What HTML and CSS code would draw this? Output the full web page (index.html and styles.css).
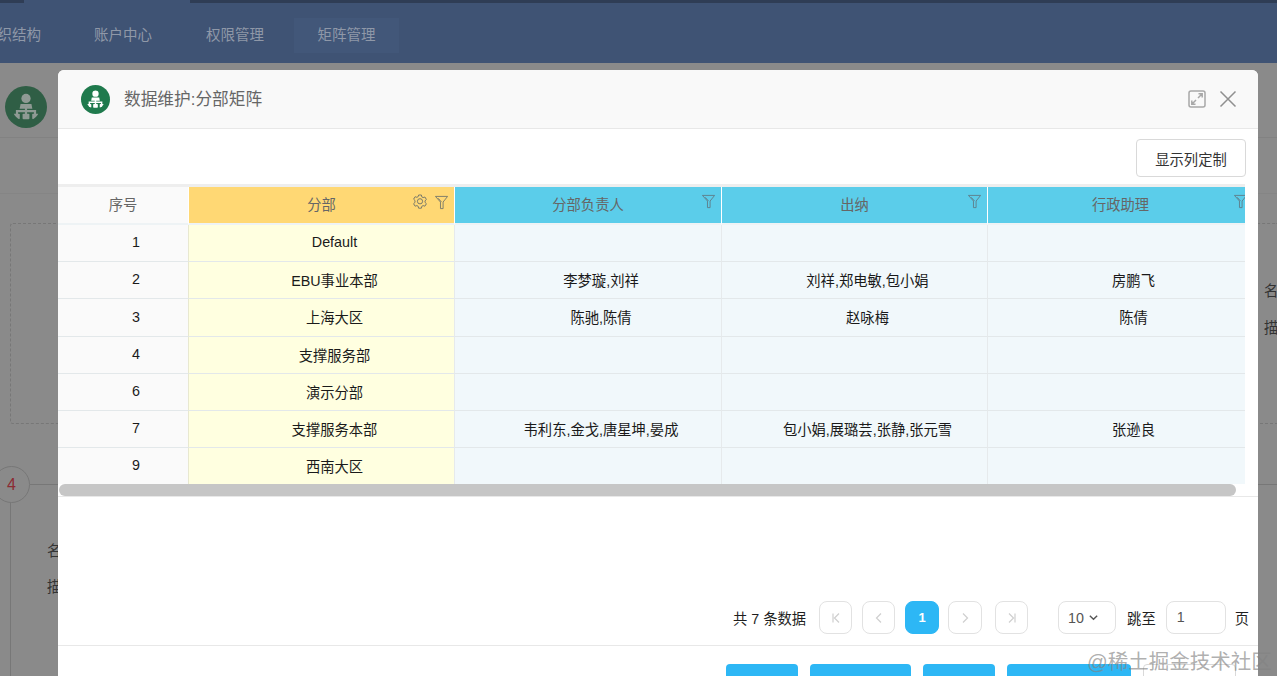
FILE: index.html
```html
<!DOCTYPE html>
<html lang="zh-CN">
<head>
    <meta charset="UTF-8">
    <title>数据维护:分部矩阵</title>
    <link rel="stylesheet" href="styles.css">
</head>
<body>
    <!-- page behind the dialog -->
    <div class="page">
        <div class="nav">
            <div class="nav-bar"><span class="nav-active"></span></div>
            <div class="nav-items">
                <a class="nav-item nav-cut">组织结构</a>
                <a class="nav-item">账户中心</a>
                <a class="nav-item">权限管理</a>
                <a class="nav-item current">矩阵管理</a>
            </div>
        </div>
        <div class="page-head">
            <svg class="org-icon page-avatar" viewBox="0 0 24 24"><use href="#org"/></svg>
        </div>
        <div class="page-sub"></div>
        <div class="panel">
            <div class="panel-labels"><span>名</span><span>描</span></div>
        </div>
        <div class="step">
            <span class="step-no">4</span>
            <span class="step-line"></span>
        </div>
        <div class="step-body"><span>名</span><span>描</span></div>
    </div>

    <div class="dialog">
        <div class="dialog-head">
            <svg class="org-icon" viewBox="0 0 24 24"><use href="#org"/></svg>
            <span class="dialog-title">数据维护:分部矩阵</span>
            <svg class="head-btn" viewBox="0 0 18 18"><rect x="1" y="1" width="16" height="16" rx="2"/><path d="M10.500 3.800h3.700v3.700M14.200 3.800 10 8M7.500 14.200H3.800v-3.700M3.800 14.200 8 10"/></svg>
            <svg class="head-btn close" viewBox="0 0 18 18"><path d="M1.500 1.500l15 15M16.500 1.500l-15 15"/></svg>
        </div>

        <div class="toolbar"><button class="btn-plain">显示列定制</button></div>

        <div class="table-wrap">
            <table class="grid">
                <colgroup>
                    <col class="c-no"><col class="c-dept"><col class="c-user-first"><col class="c-user"><col class="c-user">
                </colgroup>
                <thead>
                    <tr>
                        <th class="th-no">序号</th>
                        <th class="th-dept">分部
                            <span class="th-icons">
                                <svg class="gear" viewBox="0 0 16 16"><use href="#gear"/></svg>
                                <svg viewBox="0 0 16 16"><use href="#funnel"/></svg>
                            </span>
                        </th>
                        <th class="th-user">分部负责人<span class="th-icons"><svg viewBox="0 0 16 16"><use href="#funnel"/></svg></span></th>
                        <th class="th-user">出纳<span class="th-icons"><svg viewBox="0 0 16 16"><use href="#funnel"/></svg></span></th>
                        <th class="th-user">行政助理<span class="th-icons"><svg viewBox="0 0 16 16"><use href="#funnel"/></svg></span></th>
                    </tr>
                </thead>
                <tbody>
                    <tr><td class="td-no">1</td><td class="td-dept">Default</td><td></td><td></td><td></td></tr>
                    <tr><td class="td-no">2</td><td class="td-dept">EBU事业本部</td><td>李梦璇,刘祥</td><td>刘祥,郑电敏,包小娟</td><td>房鹏飞</td></tr>
                    <tr class="row-tall"><td class="td-no">3</td><td class="td-dept">上海大区</td><td>陈驰,陈倩</td><td>赵咏梅</td><td>陈倩</td></tr>
                    <tr><td class="td-no">4</td><td class="td-dept">支撑服务部</td><td></td><td></td><td></td></tr>
                    <tr><td class="td-no">6</td><td class="td-dept">演示分部</td><td></td><td></td><td></td></tr>
                    <tr><td class="td-no">7</td><td class="td-dept">支撑服务本部</td><td>韦利东,金戈,唐星坤,晏成</td><td>包小娟,展璐芸,张静,张元雪</td><td>张逊良</td></tr>
                    <tr><td class="td-no">9</td><td class="td-dept">西南大区</td><td></td><td></td><td></td></tr>
                </tbody>
            </table>
        </div>
        <div class="scroll-track"><div class="scroll-thumb"></div></div>

        <div class="pager">
            <span class="pager-total">共 7 条数据</span>
            <span class="page-btn"><svg viewBox="0 0 12 12"><path d="M3 1.500v9M9 1.500 4.500 6 9 10.500"/></svg></span>
            <span class="page-btn"><svg viewBox="0 0 12 12"><path d="M8 1.500 3.500 6 8 10.500"/></svg></span>
            <span class="page-btn on">1</span>
            <span class="page-btn next"><svg viewBox="0 0 12 12"><path d="M4 1.500 8.500 6 4 10.500"/></svg></span>
            <span class="page-btn last"><svg viewBox="0 0 12 12"><path d="M9 1.500v9M3 1.500 7.500 6 3 10.500"/></svg></span>
            <span class="page-size">10 <svg viewBox="0 0 12 12"><path d="M2 4l4 4 4-4"/></svg></span>
            <span class="pager-text">跳至</span>
            <span class="page-input">1</span>
            <span class="pager-text">页</span>
        </div>

        <div class="dialog-foot">
            <span class="btn-blue w72"></span>
            <span class="btn-blue w101"></span>
            <span class="btn-blue w72"></span>
            <span class="btn-blue w124"></span>
            <span class="btn-line"></span>
        </div>
    </div>

    <div class="watermark">@稀土掘金技术社区</div>

    <svg class="defs" width="0" height="0">
        <symbol id="org" viewBox="3 3 18 18">
            <circle cx="12" cy="6.500" r="3"/>
            <path d="M8.500 10h7l.6 3.200H7.900z"/>
            <path d="M11.300 12h1.400v2H18.500v2.500h-1.400v-1.200h-4.400v1.200h-1.400v-1.200H6.900v1.200H5.500V14h5.800z"/>
            <rect x="3.600" y="16.300" width="4.400" height="3.500" rx=".6"/>
            <rect x="9.800" y="16.300" width="4.400" height="3.500" rx=".6"/>
            <rect x="16" y="16.300" width="4.400" height="3.500" rx=".6"/>
        </symbol>
        <symbol id="funnel" viewBox="0 0 16 16">
            <path fill="none" stroke="currentColor" d="M1.500 1.500h13L9.700 7.500V14.500H6.900V7.500zM4.500 3.500 8 7.500"/>
        </symbol>
        <symbol id="gear" viewBox="0 0 16 16">
            <path fill="none" stroke="currentColor" d="M6.600 1h2.800l.4 1.900 1.300.7 1.800-.6 1.500 2.500-1.400 1.300v1.600l1.400 1.300-1.500 2.500-1.800-.6-1.300.7-.4 1.900H6.600l-.4-1.900-1.300-.7-1.800.6-1.500-2.500 1.400-1.300V6.500L1.600 5.200l1.500-2.500 1.800.6 1.300-.7z"/>
            <circle fill="none" stroke="currentColor" cx="8" cy="7.300" r="2.600"/>
        </symbol>
    </svg>
</body>
</html>
```

FILE: styles.css
```css
* {
    box-sizing: border-box;
}

html, body {
    height: 100%;
}

body {
    margin: 0;
    background: #8a8a8a;
    font-family: "Liberation Sans", "Noto Sans CJK SC", sans-serif;
    font-size: 14.300px;
    color: #1f1f1f;
    overflow: hidden;
}

.defs {
    position: absolute;
}

/* background page, dimmed */
.page {
    height: 676px;
    overflow: hidden;
}

.nav {
    height: 63px;
    background: #3f5374;
}

.nav-bar {
    height: 3px;
    padding-left: 24px;
    background: #2f3d55;
}

.nav-active {
    display: block;
    width: 166px;
    height: 3px;
    background: #3f5374;
}

.nav-items {
    display: flex;
    padding-top: 15px;
    margin-left: -24px;
}

.nav-item {
    width: 112px;
    height: 35px;
    line-height: 35px;
    text-align: center;
    font-size: 14.500px;
    color: #8f98a8;
}

.nav-cut {
    width: 91px;
    text-align: left;
    padding-left: 7px;
}

.nav-item.current {
    width: 105px;
    margin-left: 3px;
    background: #425779;
}

.page-head {
    height: 75px;
    padding: 23px 0 0 5px;
    border-bottom: 1px solid #828282;
}

.org-icon {
    width: 29px;
    height: 29px;
    padding: 5px;
    border-radius: 50%;
    background: #1f7a4d;
    fill: #fff;
    flex: none;
}

.page-avatar {
    width: 42px;
    height: 42px;
    padding: 7px;
    background: #2f5e45;
    fill: #8f9a94;
}

.page-sub {
    height: 56px;
    border-bottom: 1px solid #858585;
}

.panel {
    display: flex;
    justify-content: flex-end;
    height: 201px;
    margin: 29px 0 0 10px;
    padding: 55px 0 0;
    border: 1px dashed #777;
    border-right: 0;
    border-radius: 3px 0 0 3px;
}

.panel-labels {
    display: flex;
    flex-direction: column;
    gap: 16px;
    width: 13px;
    color: #333;
    overflow: hidden;
}

.panel-labels span,
.step-body span {
    display: block;
    width: 14px;
}

.step {
    display: flex;
    align-items: center;
    margin: 42px 0 0 -7px;
}

.step-no {
    width: 37px;
    height: 37px;
    line-height: 35px;
    text-align: center;
    border: 1px solid #777;
    border-radius: 50%;
    color: #8c2b33;
    font-size: 16px;
    flex: none;
}

.step-line {
    flex: 1;
    height: 1px;
    background: #777;
}

.step-body {
    height: 200px;
    margin-left: 10px;
    padding: 36px 0 0 36px;
    border-left: 1px solid #777;
    color: #333;
    display: flex;
    flex-direction: column;
    gap: 15px;
}

/* dialog sits over the page */
.dialog {
    position: absolute;
    left: 58px;
    top: 70px;
    width: 1200px;
    height: 640px;
    background: #fff;
    border-radius: 6px 6px 0 0;
}

.dialog-head {
    display: flex;
    align-items: center;
    height: 59px;
    padding: 0 21px 0 23px;
    background: #f9f9f9;
    border-bottom: 1px solid #e8e8e8;
    border-radius: 6px 6px 0 0;
}

.dialog-title {
    flex: 1;
    margin: 0 0 2px 14px;
    font-size: 16.700px;
    color: #666;
}

.head-btn {
    width: 18px;
    height: 18px;
    fill: none;
    stroke: #a8a8a8;
    stroke-width: 1.500;
}

.head-btn.close {
    margin-left: 13px;
    stroke: #909090;
}

.toolbar {
    display: flex;
    justify-content: flex-end;
    height: 55px;
    padding: 10px 12px 0 0;
}

.btn-plain {
    width: 110px;
    height: 38px;
    padding: 0;
    background: #fff;
    border: 1px solid #d9d9d9;
    border-radius: 4px;
    font: inherit;
    color: #333;
}

.table-wrap {
    width: 1187px;
    overflow: hidden;
    border-top: 3px solid #eee;
}

.grid {
    width: 1194px;
    table-layout: fixed;
    border-collapse: separate;
    border-spacing: 0;
}

.c-no { width: 130px; }
.c-dept { width: 266px; }
.c-user-first { width: 267px; }
.c-user { width: 266px; }

.grid th {
    position: relative;
    height: 38px;
    padding: 0 0 3px;
    font-weight: 400;
    font-size: 14.300px;
    color: #666;
    border-left: 1px solid #fff;
    border-bottom: 2px solid #eef3f5;
}

.grid th.th-no {
    background: #fafafa;
    border-left: 0;
}

.th-dept {
    background: #ffd874;
}

.th-user {
    background: #5bcdea;
}

.th-icons {
    position: absolute;
    top: 7px;
    right: 5px;
    display: flex;
    align-items: center;
    gap: 6px;
    color: #7b7b6a;
}

.th-user .th-icons {
    color: #5f7f8c;
}

.th-icons svg {
    width: 15px;
    height: 15px;
}

.th-icons .gear {
    width: 16px;
    height: 16px;
}

.grid td {
    height: 37px;
    padding: 0 0 2px 26px;
    text-align: center;
    font-size: 14.300px;
    color: #1a1a1a;
    background: #f1f8fb;
    border-left: 1px solid #e6eaec;
    border-bottom: 1px solid #e3e8ea;
}

.grid .row-tall td {
    height: 38px;
}

.grid tr:last-child td {
    height: 36px;
    border-bottom: 0;
}

.grid td.td-no {
    background: #fafafa;
    border-left: 0;
}

.grid td.td-dept {
    background: #ffffe0;
    border-left-color: #e8e8d0;
}

.scroll-track {
    height: 13px;
    padding-left: 1px;
    border-bottom: 1px solid #e8e8e8;
}

.scroll-thumb {
    width: 1177px;
    height: 12px;
    background: #c6c6c6;
    border-radius: 6px;
}

.pager {
    display: flex;
    align-items: center;
    justify-content: flex-end;
    height: 149px;
    padding: 104px 9px 11px 0;
    border-bottom: 1px solid #e8e8e8;
}

.pager-total {
    margin-right: 3px;
    font-size: 14.300px;
}

.page-btn {
    display: flex;
    align-items: center;
    justify-content: center;
    width: 33px;
    height: 33px;
    margin-left: 10px;
    border: 1px solid #e2e2e2;
    border-radius: 8px;
}

.page-btn.next {
    margin-left: 9px;
    width: 34px;
}

.page-btn.last {
    margin-left: 13px;
}

.page-btn svg {
    width: 12px;
    height: 12px;
    fill: none;
    stroke: #cfcfcf;
    stroke-width: 1.200;
}

.page-btn.on {
    width: 34px;
    background: #2db7f5;
    border-color: #2db7f5;
    color: #fff;
    font-weight: 700;
    font-size: 13px;
}

.page-size {
    display: flex;
    align-items: center;
    gap: 4px;
    width: 58px;
    height: 33px;
    margin-left: 30px;
    padding-left: 9px;
    border: 1px solid #e2e2e2;
    border-radius: 8px;
    color: #555;
}

.page-size svg {
    width: 11px;
    height: 11px;
    fill: none;
    stroke: #555;
    stroke-width: 1.500;
}

.page-size + .pager-text {
    margin: 0 10px 0 11px;
}

.page-input {
    width: 60px;
    height: 33px;
    line-height: 31px;
    margin-right: 9px;
    padding-left: 10px;
    border: 1px solid #e2e2e2;
    border-radius: 8px;
    color: #555;
}

.dialog-foot {
    display: flex;
    gap: 12px;
    padding: 18px 22px 0 0;
    justify-content: flex-end;
}

.btn-blue,
.btn-line {
    height: 36px;
    border-radius: 4px;
}

.btn-blue {
    background: #2db7f5;
}

.w72 { width: 72px; }
.w101 { width: 101px; }
.w124 { width: 124px; }

.btn-line {
    width: 93px;
    border: 1px solid #d9d9d9;
}

.watermark {
    position: absolute;
    left: 1087px;
    top: 645px;
    font-size: 20.500px;
    color: rgba(130, 130, 130, 0.65);
    white-space: nowrap;
}
```
